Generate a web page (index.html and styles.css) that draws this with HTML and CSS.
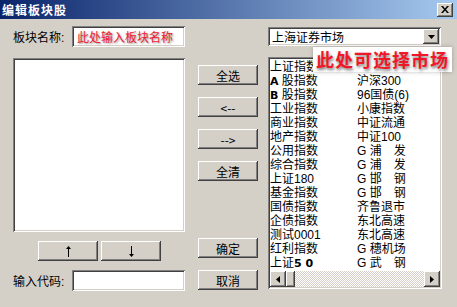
FILE: index.html
```html
<!doctype html>
<html lang="zh">
<head>
    <meta charset="UTF-8">
    <title>编辑板块股</title>
    <link rel="stylesheet" href="styles.css">
</head>
<body>
    <div class="dialog">
        <div class="titlebar">
            <span class="title">编辑板块股</span>
            <span class="close-btn">
                <svg width="8" height="7" viewBox="0 0 8 7"><path d="M0 0h2l2 2.5 2-2.5h2l-3 3.5 3 3.5h-2l-2-2.5-2 2.5h-2l3-3.5z" fill="#000"/></svg>
            </span>
        </div>
        <div class="content">
            <div class="col-left">
                <div class="field-row">
                    <span class="label">板块名称:</span>
                    <div class="field"><span class="hint">此处输入板块名称</span></div>
                </div>
                <div class="listbox left-list"></div>
                <div class="move-row">
                    <div class="btn move-btn">
                        <svg width="7" height="11" viewBox="0 0 7 11"><path d="M3 11V3H1l2.5-3 2.5 3H4v8z" fill="#000"/></svg>
                    </div>
                    <div class="btn move-btn">
                        <svg width="7" height="11" viewBox="0 0 7 11"><path d="M3 0v8H1l2.5 3 2.5-3H4V0z" fill="#000"/></svg>
                    </div>
                </div>
                <div class="field-row code-row">
                    <span class="label">输入代码:</span>
                    <div class="field"></div>
                </div>
            </div>

            <div class="col-mid">
                <div class="btn">全选</div>
                <div class="btn">&lt;--</div>
                <div class="btn">--&gt;</div>
                <div class="btn">全清</div>
                <div class="btn btn-ok">确定</div>
                <div class="btn">取消</div>
            </div>

            <div class="col-right">
                <div class="combo">
                    <span class="combo-text">上海证券市场</span>
                    <span class="combo-arrow">
                        <svg width="7" height="4" viewBox="0 0 7 4"><path d="M0 0h7L3.5 4z" fill="#000"/></svg>
                    </span>
                </div>
                <div class="listbox stock-list">
                    <div class="rows">
                        <div class="row"><span class="c1">上证指数</span><span></span></div>
                        <div class="row"><span class="c1"><b class="latin">A</b> 股指数</span><span>沪深300</span></div>
                        <div class="row"><span class="c1"><b class="latin">B</b> 股指数</span><span>96国债(6)</span></div>
                        <div class="row"><span class="c1">工业指数</span><span>小康指数</span></div>
                        <div class="row"><span class="c1">商业指数</span><span>中证流通</span></div>
                        <div class="row"><span class="c1">地产指数</span><span>中证100</span></div>
                        <div class="row"><span class="c1">公用指数</span><span>G 浦　发</span></div>
                        <div class="row"><span class="c1">综合指数</span><span>G 浦　发</span></div>
                        <div class="row"><span class="c1">上证180</span><span>G 邯　钢</span></div>
                        <div class="row"><span class="c1">基金指数</span><span>G 邯　钢</span></div>
                        <div class="row"><span class="c1">国债指数</span><span>齐鲁退市</span></div>
                        <div class="row"><span class="c1">企债指数</span><span>东北高速</span></div>
                        <div class="row"><span class="c1">测试0001</span><span>东北高速</span></div>
                        <div class="row"><span class="c1">红利指数</span><span>G 穗机场</span></div>
                        <div class="row"><span class="c1">上证<b class="latin">5 0</b></span><span>G 武　钢</span></div>
                    </div>
                    <div class="hscroll">
                        <span class="sb-btn">
                            <svg width="4" height="7" viewBox="0 0 4 7"><path d="M4 0v7L0 3.5z" fill="#000"/></svg>
                        </span>
                        <span class="sb-thumb"></span>
                        <span class="sb-track"></span>
                        <span class="sb-btn">
                            <svg width="4" height="7" viewBox="0 0 4 7"><path d="M0 0v7l4-3.5z" fill="#000"/></svg>
                        </span>
                    </div>
                </div>
                <div class="market-tip">此处可选择市场</div>
            </div>
        </div>
    </div>
</body>
</html>
```

FILE: styles.css
```css
body {
    margin: 0;
    background: #d4d0c8;
    font-family: "Liberation Sans", "Noto Sans CJK SC", sans-serif;
    font-size: 12px;
    color: #000;
}
.dialog {
    width: 457px;
    height: 307px;
    background: #d4d0c8;
    overflow: hidden;
}
.titlebar {
    height: 19px;
    display: flex;
    align-items: center;
    justify-content: space-between;
    padding: 0 4px 0 2px;
    background: linear-gradient(to right, #0a246a, #a6caf0);
}
.title {
    color: #fff;
    font-weight: bold;
    font-size: 12px;
    letter-spacing: 1px;
    font-family: "Noto Sans CJK SC", sans-serif;
}
.close-btn {
    width: 16px;
    height: 14px;
    display: flex;
    align-items: center;
    justify-content: center;
    background: #d4d0c8;
    box-shadow: inset -1px -1px #404040, inset 1px 1px #fff, inset -2px -2px #808080;
}
.content {
    display: flex;
    padding: 7px 0 0 13px;
}

/* left column */
.col-left {
    width: 172px;
    display: flex;
    flex-direction: column;
}
.field-row {
    display: flex;
    align-items: center;
    justify-content: space-between;
    height: 21px;
}
.field {
    width: 113px;
    height: 21px;
    box-sizing: border-box;
    background: #fff;
    box-shadow: inset 1px 1px #808080, inset -1px -1px #fff, inset 2px 2px #404040, inset -2px -2px #d4d0c8;
    display: flex;
    align-items: center;
    padding-left: 5px;
}
.hint {
    color: #f02030;
    font-family: "Noto Sans CJK SC", sans-serif;
    text-shadow: 1px 1px 2px rgba(0, 0, 0, 0.45);
}
.listbox {
    background: #fff;
    box-sizing: border-box;
    box-shadow: inset 1px 1px #808080, inset -1px -1px #fff, inset 2px 2px #404040, inset -2px -2px #d4d0c8;
}
.left-list {
    height: 174px;
    margin-top: 11px;
}
.move-row {
    display: flex;
    gap: 3px;
    padding-left: 25px;
    margin-top: 9px;
}
.move-btn {
    width: 59px;
}
.code-row {
    margin-top: 9px;
}

/* buttons */
.btn {
    width: 60px;
    height: 20px;
    box-sizing: border-box;
    display: flex;
    align-items: center;
    justify-content: center;
    background: #d4d0c8;
    box-shadow: inset -1px -1px #404040, inset 1px 1px #fff, inset -2px -2px #808080;
    font-family: "Noto Sans CJK SC", sans-serif;
}
.col-mid {
    width: 60px;
    margin-left: 13px;
    padding-top: 39px;
    display: flex;
    flex-direction: column;
    gap: 12px;
}
.col-mid .btn-ok {
    margin-top: 45px;
}

/* right column */
.col-right {
    width: 174px;
    margin-left: 10px;
    position: relative;
}
.combo {
    width: 173px;
    height: 19px;
    margin-top: 1px;
    box-sizing: border-box;
    background: #fff;
    box-shadow: inset 1px 1px #808080, inset -1px -1px #fff, inset 2px 2px #404040, inset -2px -2px #d4d0c8;
    display: flex;
    align-items: center;
    justify-content: space-between;
    padding: 2px;
}
.combo-text {
    padding-left: 2px;
}
.combo-arrow {
    width: 16px;
    height: 15px;
    display: flex;
    align-items: center;
    justify-content: center;
    background: #d4d0c8;
    box-shadow: inset -1px -1px #404040, inset 1px 1px #fff, inset -2px -2px #808080;
}
.stock-list {
    height: 232px;
    margin-top: 11px;
    padding: 2px;
    display: flex;
    flex-direction: column;
}
.rows {
    flex: 1;
    padding-top: 1px;
}
.row {
    display: flex;
    height: 14px;
    line-height: 14px;
    white-space: nowrap;
}
.c1 {
    width: 87px;
}
.latin {
    font-family: "DejaVu Sans", sans-serif;
    font-size: 11px;
}
.hscroll {
    display: flex;
    height: 16px;
}
.sb-btn {
    width: 16px;
    height: 16px;
    box-sizing: border-box;
    display: flex;
    align-items: center;
    justify-content: center;
    background: #d4d0c8;
    box-shadow: inset -1px -1px #404040, inset 1px 1px #fff, inset -2px -2px #808080;
}
.sb-thumb {
    width: 9px;
    background: #d4d0c8;
    box-shadow: inset -1px -1px #404040, inset 1px 1px #fff, inset -2px -2px #808080;
}
.sb-track {
    flex: 1;
    background: repeating-conic-gradient(#d4d0c8 0 25%, #fff 0 50%) 0 0 / 2px 2px;
}

/* red annotation over the list */
.market-tip {
    position: absolute;
    left: 45px;
    top: 21px;
    width: 139px;
    height: 25px;
    background: #fff;
    box-shadow: 0 0 4px rgba(0, 0, 0, 0.25);
    color: #f01828;
    font-family: "Noto Sans CJK SC", sans-serif;
    font-size: 18px;
    font-weight: bold;
    letter-spacing: 1px;
    line-height: 25px;
    text-align: center;
    text-shadow: 1px 2px 3px rgba(0, 0, 0, 0.5);
}
```
